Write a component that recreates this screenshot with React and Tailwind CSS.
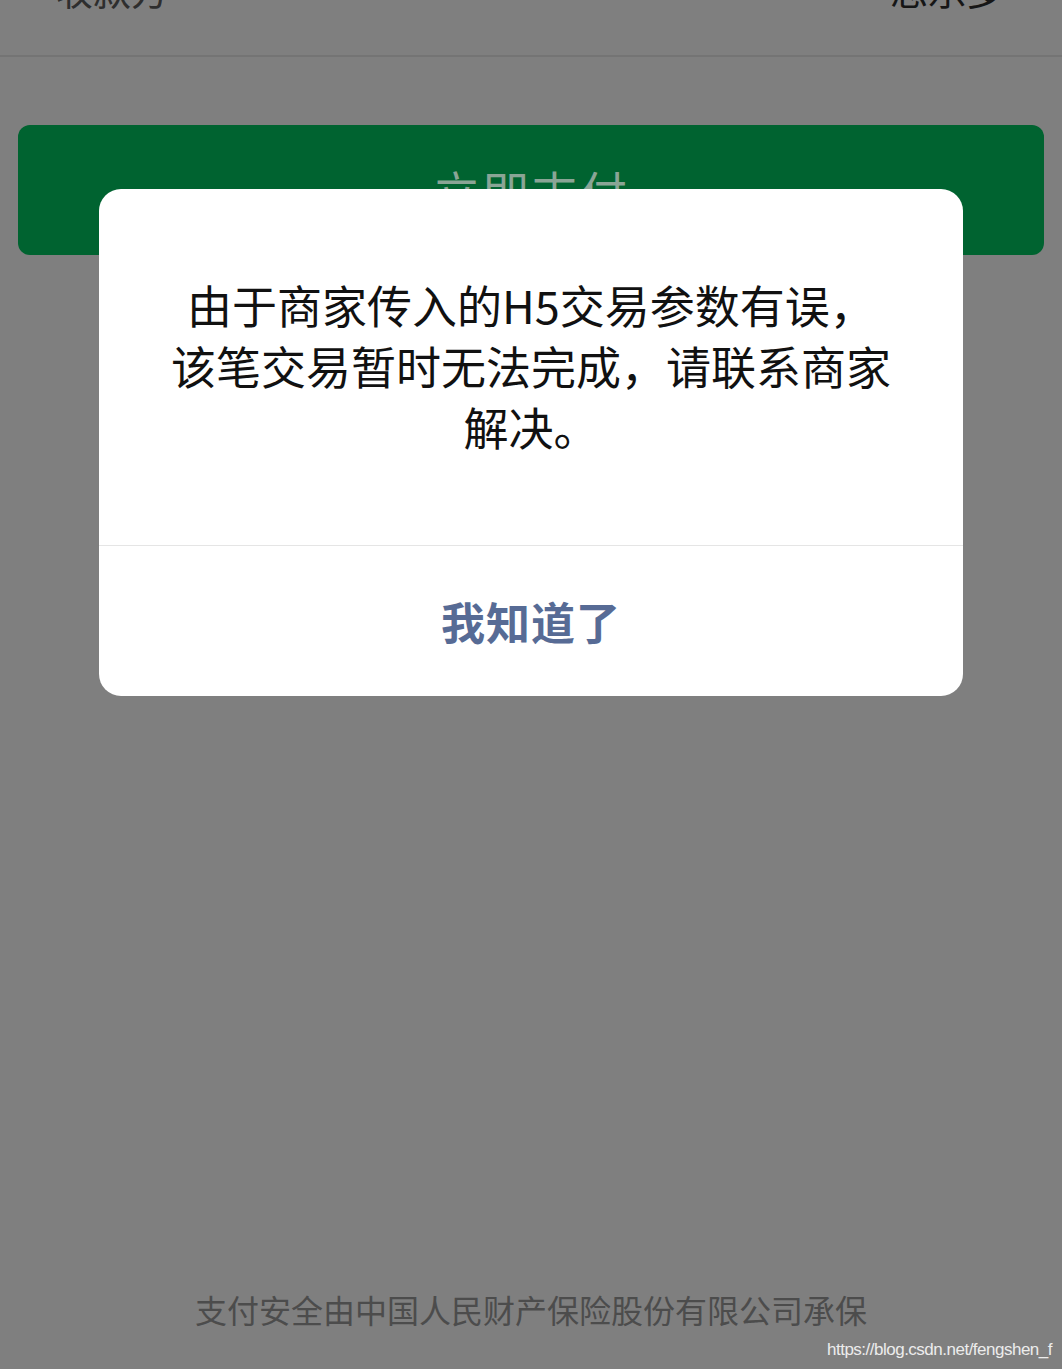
export default function App() {
  const cjk = { fontFamily: '"Noto Sans CJK SC", "Noto Sans", sans-serif' };

  return (
    <div
      className="relative flex h-[1369px] w-full flex-col overflow-hidden bg-[#7f7f7f]"
      style={cjk}
    >
      {/* Header (scrolled, only the bottom of the labels shows) */}
      <div className="flex h-[57px] justify-between border-b-2 border-[#747474] pl-[55px] pr-[58px]">
        <span className="-mt-[30px] text-[38px] leading-[37px] text-[#2e2e2e]">收款方</span>
        <span className="-mt-[30px] text-[38px] leading-[37px] text-[#161616]">思乐多</span>
      </div>

      {/* Pay button (dimmed by the mask) */}
      <div className="mx-[18px] mt-[68px] flex h-[130px] items-center justify-center rounded-[12px] bg-[#006330]">
        <span className="text-[47px] leading-none tracking-[2px] text-[#8aa596]">立即支付</span>
      </div>

      {/* Footer */}
      <div className="mt-auto flex flex-col pb-[8px]">
        <p className="text-center text-[32px] leading-[40px] text-[#4c4c4c]">
          支付安全由中国人民财产保险股份有限公司承保
        </p>
        <p
          className="mt-[10px] pr-[10px] text-right text-[17px] leading-[22px] tracking-[-0.5px] text-[#ececec]"
          style={{ fontFamily: '"Liberation Sans Narrow", "Liberation Sans", Arial, sans-serif' }}
        >
          https://blog.csdn.net/fengshen_f
        </p>
      </div>

      {/* Alert dialog */}
      <div className="absolute left-[99px] top-[189px] flex w-[864px] flex-col overflow-hidden rounded-[22px] bg-white">
        <div className="flex h-[356px] items-center justify-center px-[30px] pb-[4px]">
          <p className="text-center text-[45px] leading-[61px] text-[#111111]">
            由于商家传入的H5交易参数有误，
            <br />
            该笔交易暂时无法完成，请联系商家
            <br />
            解决。
          </p>
        </div>
        <div className="h-px bg-[#e5e5e5]" />
        <button className="flex h-[150px] items-center justify-center text-[44px] font-bold tracking-[1px] text-[#576b95]">
          我知道了
        </button>
      </div>
    </div>
  );
}
